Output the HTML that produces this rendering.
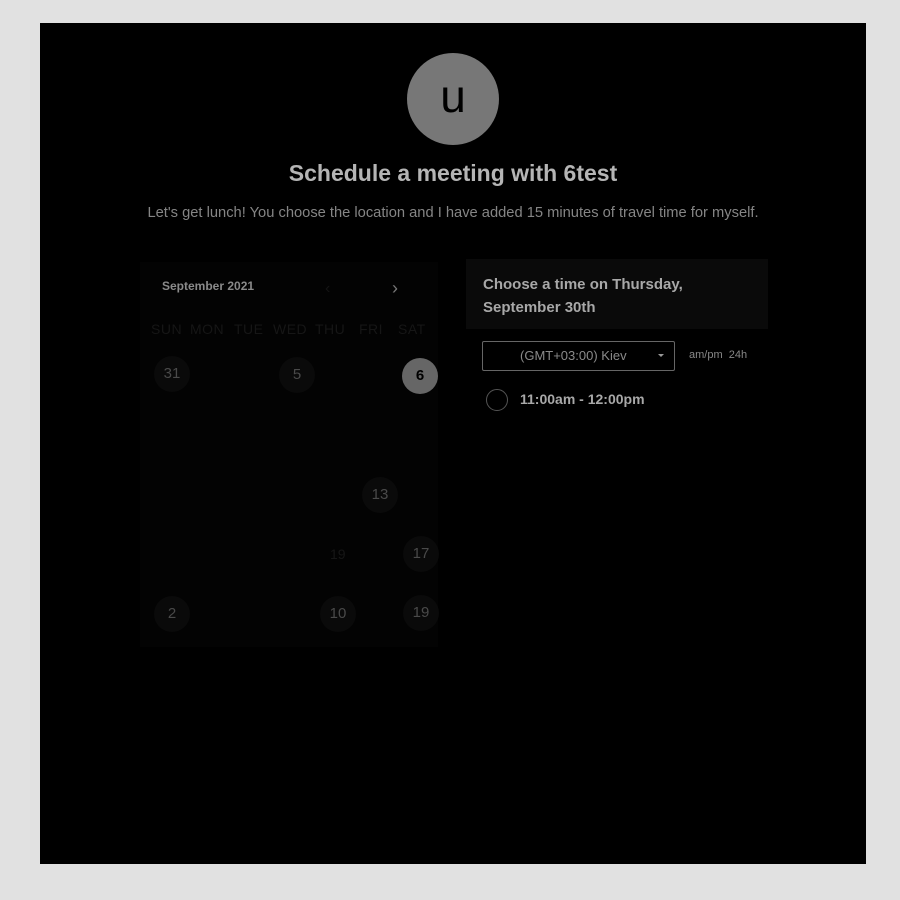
<!DOCTYPE html>
<html><head><style>
*{margin:0;padding:0;box-sizing:border-box}
body{width:900px;height:900px;background:#e1e1e1;font-family:"Liberation Sans",sans-serif;position:relative;overflow:hidden}
#main{position:absolute;left:40px;top:23px;width:826px;height:841px;background:#000}
.a{position:absolute}
.avatar{left:407px;top:53px;width:92px;height:92px;border-radius:50%;background:#777;color:#000;font-size:46px;text-align:center;line-height:86px}
.d{position:absolute;width:36px;height:36px;border-radius:50%;background:#0a0a0a;color:#4a4a4a;font-size:15px;text-align:center;line-height:36px}
.w{position:absolute;top:321px;font-size:14px;color:#161616;letter-spacing:.5px}
</style></head><body>
<div id="main"></div>
<div class="a avatar">u</div>
<div class="a" style="left:0;width:906px;top:160px;text-align:center;font-size:23px;font-weight:bold;color:#b5b5b5">Schedule a meeting with 6test</div>
<div class="a" style="left:0;width:906px;top:205px;text-align:center;font-size:14.7px;color:#858585">Let's get lunch! You choose the location and I have added 15 minutes of travel time for myself.</div>
<div class="a" style="left:140px;top:262px;width:298px;height:385px;background:#030303"></div>
<div class="a" style="left:162px;top:279px;font-size:12px;font-weight:bold;color:#8a8a8a">September 2021</div>
<div class="a" style="left:325px;top:280px;font-size:16px;color:#141414">‹</div>
<div class="a" style="left:392px;top:278px;font-size:18px;color:#777">›</div>
<div class="w" style="left:151px">SUN</div><div class="w" style="left:190px">MON</div><div class="w" style="left:234px">TUE</div><div class="w" style="left:273px">WED</div><div class="w" style="left:315px">THU</div><div class="w" style="left:359px">FRI</div><div class="w" style="left:398px">SAT</div>
<div class="d" style="left:154px;top:356px">31</div>
<div class="d" style="left:279px;top:357px">5</div>
<div class="d" style="left:402px;top:358px;background:#666;color:#000;font-weight:bold">6</div>
<div class="d" style="left:362px;top:477px">13</div>
<div class="d" style="left:403px;top:536px">17</div>
<div class="d" style="left:154px;top:596px">2</div>
<div class="d" style="left:320px;top:596px">10</div>
<div class="d" style="left:403px;top:595px">19</div>
<div class="a" style="left:330px;top:546px;font-size:14px;color:#161616">19</div>
<div class="a" style="left:466px;top:259px;width:302px;height:70px;background:#0a0a0a"></div>
<div class="a" style="left:483px;top:273px;font-size:15px;font-weight:bold;color:#a8a8a8;line-height:23px">Choose a time on Thursday,<br>September 30th</div>
<div class="a" style="left:482px;top:341px;width:193px;height:30px;border:1px solid #666;border-radius:2px"></div>
<div class="a" style="left:520px;top:348px;font-size:13px;color:#8a8a8a">(GMT+03:00) Kiev</div>
<div class="a" style="left:658px;top:354px;border-left:3px solid transparent;border-right:3px solid transparent;border-top:3px solid #999"></div>
<div class="a" style="left:689px;top:349px;font-size:11px;color:#888">am/pm&nbsp; 24h</div>
<div class="a" style="left:486px;top:389px;width:22px;height:22px;border-radius:50%;border:1px solid #555"></div>
<div class="a" style="left:520px;top:391px;font-size:14px;font-weight:bold;color:#a8a8a8">11:00am - 12:00pm</div>
</body></html>
